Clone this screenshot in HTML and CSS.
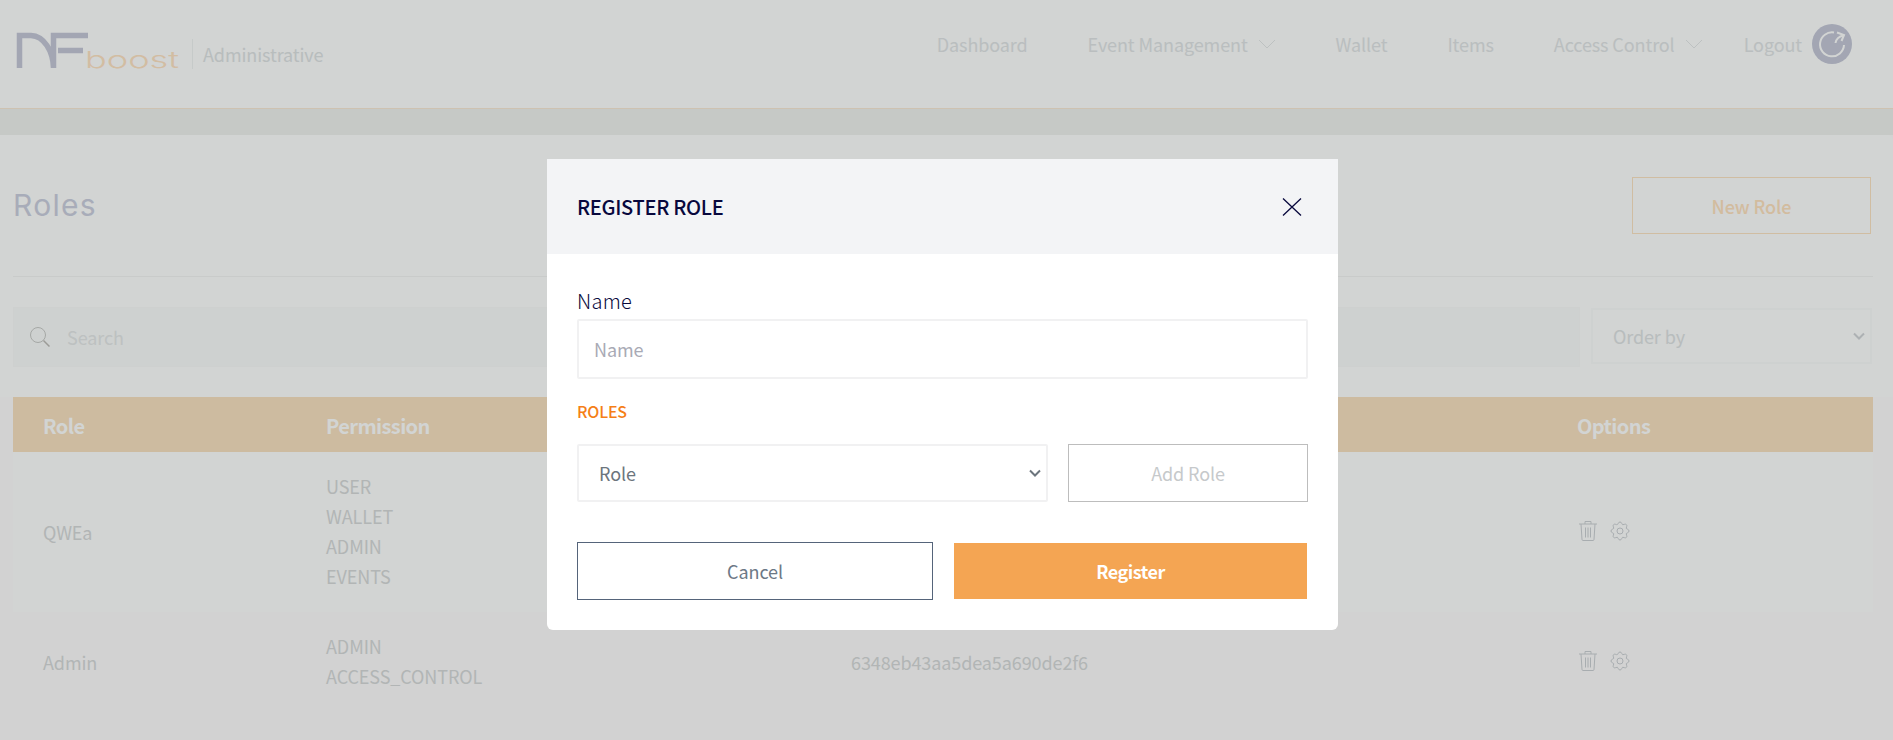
FILE: index.html
```html
<!DOCTYPE html>
<html lang="en">
<head>
  <meta charset="UTF-8" />
  <meta name="viewport" content="width=device-width, initial-scale=1.0" />
  <title>Roles - NFboost Administrative</title>
  <link rel="stylesheet" href="styles.css">
</head>
<body>
  <header class="topbar">
    <div class="brand">
      <svg class="brand-logo" viewBox="14 28 170 44" width="170" height="44" aria-label="NFboost">
        <path class="logo-mark" d="M19.5 67V34.500H31C44 35 53 50 53.500 67V34.500H88M58 49.500H83" />
        <text class="logo-word" x="85" y="66.500" textLength="94" lengthAdjust="spacingAndGlyphs">boost</text>
      </svg>
      <span class="brand-name">Administrative</span>
    </div>
    <nav class="nav">
      <a class="nav-link">Dashboard</a>
      <a class="nav-link">Event Management
        <svg class="nav-caret" viewBox="0 0 18 10" width="18" height="10"><path d="M1 1l8 8 8-8" /></svg>
      </a>
      <a class="nav-link">Wallet</a>
      <a class="nav-link">Items</a>
      <a class="nav-link">Access Control
        <svg class="nav-caret" viewBox="0 0 18 10" width="18" height="10"><path d="M1 1l8 8 8-8" /></svg>
      </a>
      <a class="nav-link nav-logout">Logout
        <span class="logout-badge">
          <svg viewBox="0 0 40 40" width="40" height="40">
            <path d="M22 8.500A12 12 0 1 0 32 21" />
            <path d="M25 8.500L32 11L29.500 17M32 11C27 12.500 24 15 23.500 19" />
          </svg>
        </span>
      </a>
    </nav>
  </header>
  <div class="band"></div>

  <main class="content">
    <div class="page-top">
      <div class="title-row">
        <h1>Roles</h1>
        <button class="btn-new" type="button">New Role</button>
      </div>
      <div class="toolbar">
        <div class="search">
          <svg viewBox="0 0 22 22" width="22" height="22">
            <circle class="search-lens" cx="9" cy="9" r="7.500" />
            <path class="search-handle" d="M14.500 14.500l6 6" />
          </svg>
          <input type="text" placeholder="Search" />
        </div>
        <select class="order">
          <option>Order by</option>
        </select>
      </div>
    </div>

    <table class="roles">
      <colgroup>
        <col class="col-role" /><col class="col-perm" /><col class="col-id" /><col />
      </colgroup>
      <thead>
        <tr><th>Role</th><th>Permission</th><th>Id</th><th>Options</th></tr>
      </thead>
      <tbody>
        <tr>
          <td>QWEa</td>
          <td class="perms"><div>USER</div><div>WALLET</div><div>ADMIN</div><div>EVENTS</div></td>
          <td>6348eb43aa5dea5a690de2f1</td>
          <td>
            <div class="row-actions">
              <svg class="icon" viewBox="0 0 20 22" width="20" height="22"><path d="M1 4h18M7 4V1.500h6V4M3 4l1 15.500q.1 1 1 1h10q.9 0 1-1L17 4M7.500 7.500v10M10 7.500v10M12.500 7.500v10" /></svg>
              <svg class="icon" viewBox="0 0 24 24" width="24" height="24"><path d="M10.325 4.317c.426-1.756 2.924-1.756 3.35 0a1.724 1.724 0 002.573 1.066c1.543-.94 3.31.826 2.37 2.37a1.724 1.724 0 001.065 2.572c1.756.426 1.756 2.924 0 3.35a1.724 1.724 0 00-1.066 2.573c.94 1.543-.826 3.31-2.37 2.37a1.724 1.724 0 00-2.572 1.065c-.426 1.756-2.924 1.756-3.35 0a1.724 1.724 0 00-2.573-1.066c-1.543.94-3.31-.826-2.37-2.37a1.724 1.724 0 00-1.065-2.572c-1.756-.426-1.756-2.924 0-3.35a1.724 1.724 0 001.066-2.573c-.94-1.543.826-3.31 2.37-2.37.996.608 2.296.07 2.572-1.065z" /><circle cx="12" cy="12" r="3" /></svg>
            </div>
          </td>
        </tr>
        <tr class="alt">
          <td>Admin</td>
          <td class="perms"><div>ADMIN</div><div>ACCESS_CONTROL</div></td>
          <td>6348eb43aa5dea5a690de2f6</td>
          <td>
            <div class="row-actions">
              <svg class="icon" viewBox="0 0 20 22" width="20" height="22"><path d="M1 4h18M7 4V1.500h6V4M3 4l1 15.500q.1 1 1 1h10q.9 0 1-1L17 4M7.500 7.500v10M10 7.500v10M12.500 7.500v10" /></svg>
              <svg class="icon" viewBox="0 0 24 24" width="24" height="24"><path d="M10.325 4.317c.426-1.756 2.924-1.756 3.35 0a1.724 1.724 0 002.573 1.066c1.543-.94 3.31.826 2.37 2.37a1.724 1.724 0 001.065 2.572c1.756.426 1.756 2.924 0 3.35a1.724 1.724 0 00-1.066 2.573c.94 1.543-.826 3.31-2.37 2.37a1.724 1.724 0 00-2.572 1.065c-.426 1.756-2.924 1.756-3.35 0a1.724 1.724 0 00-2.573-1.066c-1.543.94-3.31-.826-2.37-2.37a1.724 1.724 0 00-1.065-2.572c-1.756-.426-1.756-2.924 0-3.35a1.724 1.724 0 001.066-2.573c-.94-1.543.826-3.31 2.37-2.37.996.608 2.296.07 2.572-1.065z" /><circle cx="12" cy="12" r="3" /></svg>
            </div>
          </td>
        </tr>
      </tbody>
    </table>
  </main>

  <div class="backdrop"></div>

  <form class="modal">
    <div class="modal-head">
      <h2>REGISTER ROLE</h2>
      <button class="modal-close" type="button" aria-label="Close">
        <svg viewBox="0 0 20 18" width="20" height="18"><path d="M1 .5l18 17M19 .5l-18 17" /></svg>
      </button>
    </div>
    <div class="modal-body">
      <label class="field-label" for="roleName">Name</label>
      <input class="field" id="roleName" type="text" placeholder="Name" />
      <div class="section-label">ROLES</div>
      <div class="role-row">
        <select class="field role-select">
          <option>Role</option>
        </select>
        <button class="btn-add" type="button">Add Role</button>
      </div>
      <div class="modal-actions">
        <button class="btn-cancel" type="button">Cancel</button>
        <button class="btn-register" type="submit">Register</button>
      </div>
    </div>
  </form>
</body>
</html>
```

FILE: styles.css
```css
* { box-sizing: border-box; }
html, body { height: 100%; }
body { margin: 0; background: #fffdfe; font-family: "Noto Sans CJK JP", "Lato", sans-serif; font-size: 18px; letter-spacing: -0.1px; color: #d8dadb; overflow: hidden; }
button, input, select { font-family: inherit; font-size: 18px; letter-spacing: inherit; }
select { appearance: none; background-repeat: no-repeat; background-position: right 5px center; background-size: 12px 8px; }

/* top bar */
.topbar { height: 109px; display: flex; align-items: center; justify-content: space-between; background: #fff; border-bottom: 1px solid #fbe9d6; padding: 0 41px 0 14px; }
.brand { display: flex; align-items: center; margin-top: -7px; }
.brand-logo { display: block; }
.logo-mark { fill: none; stroke: #c6c8d9; stroke-width: 5.500; }
.logo-word { font-family: "Inter", sans-serif; font-weight: 300; font-size: 23px; letter-spacing: 0; fill: #ffe3c4; }
.brand-name { border-left: 1px solid #f1f3f3; margin-left: 8px; padding-left: 10px; line-height: 30px; color: #e0e3e5; margin-top: 6px; }
.nav { display: flex; align-items: center; gap: 60px; margin-top: -21px; }
.nav-link { display: flex; align-items: center; gap: 10px; color: #e2e5e7; line-height: 26px; white-space: nowrap; }
.nav-caret { fill: none; stroke: #e6e8ea; stroke-width: 1; }
.nav-logout { margin-left: -19px; }
.logout-badge { width: 40px; height: 40px; border-radius: 50%; background: #c6c8d9; display: block; }
.logout-badge svg { display: block; fill: none; stroke: #fff; stroke-width: 2; }
.band { height: 26px; background: #f1f2f0; }

/* page */
.content { padding: 0 20px 0 13px; background: #fffdfe; }
.page-top { background: #fff; margin: 0 -20px 0 -13px; padding: 0 20px 30px 13px; border-radius: 0 6px 0 0; }
.title-row { display: flex; align-items: flex-end; justify-content: space-between; padding: 42px 2px 42px 0; border-bottom: 1px solid #f4f5f5; }
h1 { margin: 0 0 11px; font-family: "Inter", sans-serif; font-weight: 400; font-size: 30px; line-height: 36px; letter-spacing: 1.300px; color: #cdcfe0; }
.btn-new { width: 239px; height: 57px; background: transparent; border: 1px solid #fde3c4; color: #ffe2bf; font-weight: 500; }
.toolbar { display: flex; align-items: flex-start; gap: 11px; margin-top: 30px; }
.search { flex: 1; height: 60px; display: flex; align-items: center; gap: 14px; background: #fbfcfc; border: 1px solid #fafbfb; padding-left: 15px; }
.search input { border: 0; outline: 0; background: transparent; flex: 1; }
.search input::placeholder { color: #e6e8e9; opacity: 1; }
.search-lens { fill: none; stroke: #c9cac8; stroke-width: 1; }
.search-handle { fill: none; stroke: #bdbab6; stroke-width: 1.500; }
.order { width: 281px; height: 56px; margin-top: 1px; margin-right: 1px; background-color: transparent; background-image: url("data:image/svg+xml,%3Csvg xmlns='http://www.w3.org/2000/svg' viewBox='0 0 12 8'%3E%3Cpath d='M1 1.500l5 5 5-5' fill='none' stroke='%23d3d5d9' stroke-width='2'/%3E%3C/svg%3E"); border: 2px solid #fbfcfc; padding: 0 4px 0 20px; color: #e0e3e5; }

/* table */
.roles { width: 100%; border-collapse: collapse; table-layout: fixed; }
.col-role { width: 283px; }
.col-perm { width: 525px; }
.col-id { width: 726px; }
.roles th { height: 55px; padding: 2px 0 0 30px; text-align: left; background: #f9e1c2; color: #fff; font-size: 20px; font-weight: 700; letter-spacing: -0.600px; }
.roles td { padding: 20px 0 20px 30px; line-height: 30px; vertical-align: middle; background: #fff; }
.roles .perms { padding-top: 19px; padding-bottom: 21px; }
.roles .alt td { background: #fffdfe; }
.row-actions { display: flex; align-items: center; gap: 10px; margin: -2px 0 0 1px; }
.icon { fill: none; stroke: #cdd0d5; stroke-width: 1; }

/* modal */
.backdrop { position: fixed; inset: 0; background: rgba(0, 10, 5, 0.176); }
.modal { position: fixed; left: 547px; top: 159px; width: 791px; background: #fff; border-radius: 0 0 6px 6px; }
.modal-head { height: 95px; display: flex; align-items: center; justify-content: space-between; padding: 0 36px 0 30px; background: #f3f4f6; }
.modal-head h2 { margin: 0; font-size: 20px; font-weight: 500; letter-spacing: -0.300px; color: #08083d; }
.modal-close { border: 0; background: none; padding: 0; display: block; height: 18px; }
.modal-close svg { display: block; fill: none; stroke: #08083d; stroke-width: 1.300; }
.modal-body { padding: 33px 30px 30px; }
.field-label { display: block; font-size: 20px; font-weight: 300; line-height: 28px; letter-spacing: 0.300px; margin-bottom: 4px; color: #08083d; }
.field { width: 100%; height: 60px; border: 2px solid #f1f1f2; border-radius: 2px; background-color: #fff; padding: 0 15px; outline: 0; color: #6c757d; }
.field::placeholder { color: #a9aab5; opacity: 1; }
.section-label { margin-top: 22px; font-size: 16px; font-weight: 500; line-height: 20px; letter-spacing: -0.200px; color: #f57f17; }
.role-row { display: flex; gap: 20px; margin-top: 23px; }
.role-select { width: 471px; height: 58px; padding: 0 4px 0 20px; flex: none; background-image: url("data:image/svg+xml,%3Csvg xmlns='http://www.w3.org/2000/svg' viewBox='0 0 12 8'%3E%3Cpath d='M1 1.500l5 5 5-5' fill='none' stroke='%236c757d' stroke-width='2'/%3E%3C/svg%3E"); }
.btn-add { width: 240px; height: 58px; background: #fff; border: 1px solid #bdbdbd; color: #c6c9cb; }
.modal-actions { display: flex; align-items: center; gap: 21px; margin-top: 40px; }
.btn-cancel { width: 356px; height: 58px; background: #fff; border: 1px solid #55647a; color: #6c7886; }
.btn-register { width: 353px; height: 56px; background: #f4a553; border: 0; color: #fff; font-weight: 700; letter-spacing: -0.500px; }
```
